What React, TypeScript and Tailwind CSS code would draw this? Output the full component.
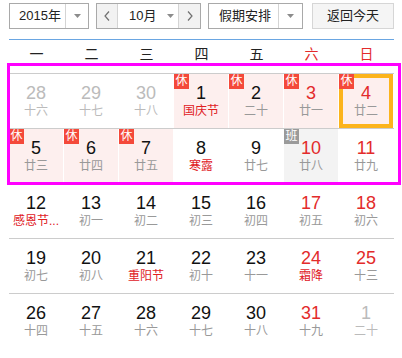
import React from "react";

type Cell = {
  d: string;
  l: string;
  other?: boolean;
  red?: boolean;
  fest?: boolean;
  rest?: boolean;
  work?: boolean;
  today?: boolean;
};

const rows: Cell[][] = [
  [
    { d: "28", l: "十六", other: true },
    { d: "29", l: "十七", other: true },
    { d: "30", l: "十八", other: true },
    { d: "1", l: "国庆节", fest: true, rest: true },
    { d: "2", l: "二十", rest: true },
    { d: "3", l: "廿一", red: true, rest: true },
    { d: "4", l: "廿二", red: true, rest: true, today: true },
  ],
  [
    { d: "5", l: "廿三", rest: true },
    { d: "6", l: "廿四", rest: true },
    { d: "7", l: "廿五", rest: true },
    { d: "8", l: "寒露", fest: true },
    { d: "9", l: "廿七" },
    { d: "10", l: "廿八", red: true, work: true },
    { d: "11", l: "廿九", red: true },
  ],
  [
    { d: "12", l: "感恩节...", fest: true },
    { d: "13", l: "初一" },
    { d: "14", l: "初二" },
    { d: "15", l: "初三" },
    { d: "16", l: "初四" },
    { d: "17", l: "初五", red: true },
    { d: "18", l: "初六", red: true },
  ],
  [
    { d: "19", l: "初七" },
    { d: "20", l: "初八" },
    { d: "21", l: "重阳节", fest: true },
    { d: "22", l: "初十" },
    { d: "23", l: "十一" },
    { d: "24", l: "霜降", red: true, fest: true },
    { d: "25", l: "十三", red: true },
  ],
  [
    { d: "26", l: "十四" },
    { d: "27", l: "十五" },
    { d: "28", l: "十六" },
    { d: "29", l: "十七" },
    { d: "30", l: "十八" },
    { d: "31", l: "十九", red: true },
    { d: "1", l: "二十", other: true },
  ],
];

const Tri = () => (
  <svg width="7" height="4" viewBox="0 0 7 4">
    <polygon points="0,0 7,0 3.5,4" fill="#8c8c8c" />
  </svg>
);

const Chev = ({ dir }: { dir: "l" | "r" }) => (
  <svg width="6" height="10" viewBox="0 0 6 10">
    <polyline
      points={dir === "l" ? "5,0.5 1,5 5,9.5" : "1,0.5 5,5 1,9.5"}
      fill="none"
      stroke="#707070"
      strokeWidth="1.2"
    />
  </svg>
);

function DayCell({ c }: { c: Cell }) {
  let bg = "bg-white";
  if (c.rest) bg = "bg-[#fdefee]";
  if (c.work) bg = "bg-[#f3f3f3]";
  const numColor = c.other ? "text-[#bbbbbb]" : c.red ? "text-[#e32b2b]" : "text-[#111111]";
  const lunColor = c.other ? "text-[#bbbbbb]" : c.fest ? "text-[#e0201f]" : "text-[#999999]";
  return (
    <div className={`relative h-[54px] border-r border-white ${bg} flex flex-col items-center pt-[8px]`}>
      {c.today && <div className="absolute left-0 top-0 right-0 bottom-0 border-[4px] border-[#fcb41c]" />}
      {c.rest && (
        <div className="absolute left-0 top-0 w-[15px] h-[15px] bg-[#f4493a] text-white text-[12px] leading-[15px] text-center">
          休
        </div>
      )}
      {c.work && (
        <div className="absolute left-0 top-0 w-[15px] h-[15px] bg-[#9a9a9a] text-white text-[12px] leading-[15px] text-center">
          班
        </div>
      )}
      <div className={`relative text-[18px] leading-[22px] ${numColor}`}>{c.d}</div>
      <div className={`relative text-[12px] leading-[15px] whitespace-nowrap ${lunColor}`}>{c.l}</div>
    </div>
  );
}

export default function App() {
  const week = ["一", "二", "三", "四", "五", "六", "日"];
  return (
    <div
      className="relative w-[402px] h-[358px] bg-white overflow-hidden"
      style={{ fontFamily: '"Liberation Sans", "Noto Sans CJK SC", sans-serif' }}
    >
      <div className="pl-[9px] pt-[3px] w-[394px]">
        <div className="flex h-[26px] text-[13px] text-[#222]">
          <div className="flex w-[80px] border border-[#a9a9a9] bg-white">
            <div className="w-[55px] pl-[9px] flex items-center">2015年</div>
            <div className="flex-1 border-l border-[#d4d4d4] flex items-center justify-center">
              <Tri />
            </div>
          </div>
          <div className="ml-[7px] flex w-[105px] border border-[#a9a9a9] bg-white">
            <div className="w-[21px] bg-[#f2f2f2] border-r border-[#d4d4d4] flex items-center justify-center">
              <Chev dir="l" />
            </div>
            <div className="flex-1 flex items-center pl-[11px]">
              <span>10月</span>
              <span className="ml-[11px] flex">
                <Tri />
              </span>
            </div>
            <div className="w-[22px] bg-[#f2f2f2] border-l border-[#d4d4d4] flex items-center justify-center">
              <Chev dir="r" />
            </div>
          </div>
          <div className="ml-[7px] flex w-[95px] border border-[#a9a9a9] bg-white">
            <div className="w-[69px] pl-[10px] flex items-center">假期安排</div>
            <div className="flex-1 border-l border-[#d4d4d4] flex items-center justify-center">
              <Tri />
            </div>
          </div>
          <div className="ml-[9px] w-[82px] border border-[#d6d6d6] bg-[#f5f5f5] flex items-center justify-center">
            返回今天
          </div>
        </div>
        <div className="mt-[10px] border-t border-[#6aa6e2]" />
        <div className="grid grid-cols-7 h-[33px] pt-[4px] text-[14px] leading-[20px]">
          {week.map((w, i) => (
            <div key={w} className={`text-center ${i >= 5 ? "text-[#e32b2b]" : "text-[#222]"}`}>
              {w}
            </div>
          ))}
        </div>
        {rows.map((r, ri) => (
          <div key={ri} className="grid grid-cols-7 border-t border-[#cccccc]">
            {r.map((c, ci) => (
              <DayCell key={ci} c={c} />
            ))}
          </div>
        ))}
      </div>
      <div className="absolute left-[7px] top-[63px] w-[394px] h-[122px] border-[3px] border-[#ff00ff]" />
    </div>
  );
}
